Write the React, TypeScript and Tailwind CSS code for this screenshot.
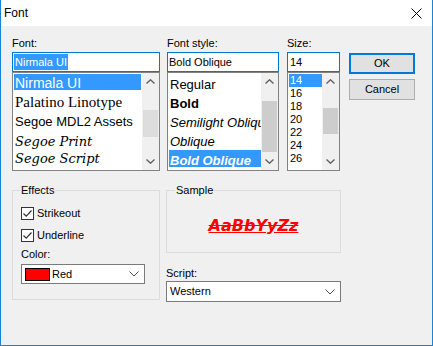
import React from "react";

const Chevron = ({ up = false }: { up?: boolean }) => (
  <svg width="9" height="5" viewBox="0 0 9 5" className="block">
    <polyline
      points={up ? "0.5,4.5 4.5,0.8 8.5,4.5" : "0.5,0.5 4.5,4.2 8.5,0.5"}
      fill="none"
      stroke="#606060"
      strokeWidth="1.4"
    />
  </svg>
);

function ScrollBar({ thumbTop, thumbH, thumbColor = "bg-[#cdcdcd]" }: { thumbTop: number; thumbH: number; thumbColor?: string }) {
  return (
    <div className="w-[17px] shrink-0 bg-[#f0f0f0] flex flex-col">
      <div className="h-[17px] flex items-center justify-center">
        <Chevron up />
      </div>
      <div className="flex-1 flex flex-col items-center">
        <div className={`w-[15px] ${thumbColor}`} style={{ marginTop: thumbTop, height: thumbH }} />
      </div>
      <div className="h-[17px] flex items-center justify-center">
        <Chevron />
      </div>
    </div>
  );
}

function Combo({ children, h }: { children: React.ReactNode; h: string }) {
  return (
    <div className={`${h} border border-[#7a7a7a] bg-white flex items-center pr-[5px]`}>
      <div className="flex-1 flex items-center">{children}</div>
      <svg width="10" height="6" viewBox="0 0 10 6">
        <polyline points="0.5,0.5 5,5 9.5,0.5" fill="none" stroke="#505050" strokeWidth="1" />
      </svg>
    </div>
  );
}

function CheckRow({ label }: { label: string }) {
  return (
    <div className="h-[13px] flex items-center">
      <div className="w-[13px] h-[13px] border border-[#333333] bg-white flex items-center justify-center">
        <svg width="11" height="11" viewBox="0 0 11 11">
          <polyline points="1.5,5.5 4.2,8.2 9.5,2.5" fill="none" stroke="#333333" strokeWidth="1.2" />
        </svg>
      </div>
      <span className="ml-[3px]">{label}</span>
    </div>
  );
}

export default function App() {
  const sizes = ["14", "16", "18", "20", "22", "24", "26"];
  return (
    <div className="w-[433px] h-[346px] flex flex-col border-x border-b border-[#1883d7] bg-[#f0f0f0] font-['Liberation_Sans',Arial,sans-serif] text-[11px] text-black select-none">
      {/* Title bar */}
      <div className="h-[26px] shrink-0 bg-white flex items-center justify-between">
        <span className="pl-[3px] text-[12px]">Font</span>
        <svg width="11" height="11" viewBox="0 0 11 11" className="mr-[10px]">
          <path d="M0.5 0.5 L10.5 10.5 M10.5 0.5 L0.5 10.5" stroke="#000" strokeWidth="1" />
        </svg>
      </div>

      <div className="flex-1 pl-[11px] pt-[10px]">
        {/* Top row */}
        <div className="flex items-start">
          {/* Font */}
          <div className="w-[148px] flex flex-col">
            <div className="h-[16px] leading-[14px]">Font:</div>
            <div className="h-[20px] border border-[#0078d7] bg-white p-[1px] flex">
              <span className="bg-[#3399ff] text-white px-[1px] leading-[16px]">Nirmala UI</span>
            </div>
            <div className="h-[99px] border border-[#828282] bg-white flex">
              <div className="flex-1 overflow-hidden p-[1px] whitespace-nowrap">
                <div className="h-[16px] pt-[2px] pl-[1px] leading-none text-[14px] bg-[#3399ff] text-white">Nirmala UI</div>
                <div className="h-[20px] pt-[5px] pl-[1px] leading-none text-[15px] font-['Liberation_Serif',serif]">Palatino Linotype</div>
                <div className="h-[18px] pt-[5px] pl-[1px] leading-none text-[13px]">Segoe MDL2 Assets</div>
                <div className="h-[20px] pt-[7px] pl-[1px] leading-none text-[13px] italic font-['DejaVu_Serif',serif]">Segoe Print</div>
                <div className="h-[20px] pt-[4px] pl-[1px] leading-none text-[13px] italic font-['DejaVu_Serif',serif]">Segoe Script</div>
              </div>
              <ScrollBar thumbTop={20} thumbH={27} thumbColor="bg-[#dddddd]" />
            </div>
          </div>

          {/* Font style */}
          <div className="w-[112px] ml-[7px] flex flex-col">
            <div className="h-[16px] leading-[14px]">Font style:</div>
            <div className="h-[20px] border border-[#0078d7] bg-white pl-[1px] leading-[18px]">Bold Oblique</div>
            <div className="h-[99px] border border-[#828282] bg-white flex">
              <div className="flex-1 min-w-0 overflow-hidden py-[1px] pl-[1px] whitespace-nowrap text-[13px]">
                <div className="h-[19px] pt-[4px] pl-[1px] leading-none">Regular</div>
                <div className="h-[19px] pt-[4px] pl-[1px] leading-none font-bold">Bold</div>
                <div className="h-[19px] pt-[4px] pl-[1px] leading-none italic overflow-hidden">Semilight Oblique</div>
                <div className="h-[19px] pt-[4px] pl-[1px] leading-none italic">Oblique</div>
                <div className="h-[17px] pt-[4px] pl-[1px] leading-none italic font-bold bg-[#3399ff] text-white">Bold Oblique</div>
              </div>
              <ScrollBar thumbTop={11} thumbH={51} />
            </div>
          </div>

          {/* Size */}
          <div className="w-[53px] ml-[8px] flex flex-col">
            <div className="h-[16px] leading-[14px]">Size:</div>
            <div className="h-[20px] border border-[#0078d7] bg-white pl-[2px] leading-[18px]">14</div>
            <div className="h-[99px] border border-[#828282] bg-white flex">
              <div className="flex-1 overflow-hidden py-[1px] pl-[1px]">
                {sizes.map((s, i) => (
                  <div
                    key={s}
                    className={`h-[13px] pt-[1px] pl-[1px] leading-none ${i === 0 ? "bg-[#3399ff] text-white" : ""}`}
                  >
                    {s}
                  </div>
                ))}
              </div>
              <ScrollBar thumbTop={18} thumbH={26} />
            </div>
          </div>

          {/* Buttons */}
          <div className="w-[66px] ml-[9px] mt-[17px] flex flex-col">
            <button className="h-[21px] border-2 border-[#0078d7] bg-[#e1e1e1] flex items-center justify-center">OK</button>
            <button className="h-[21px] mt-[5px] border border-[#adadad] bg-[#e1e1e1] flex items-center justify-center">Cancel</button>
          </div>
        </div>

        {/* Bottom row */}
        <div className="flex items-start mt-[11px]">
          <fieldset className="w-[148px] h-[118px] border border-[#dcdcdc]">
            <legend className="ml-[7px] px-[1px] leading-[16px]">Effects</legend>
            <div className="pl-[8px] pr-[14px] flex flex-col">
              <div className="mt-[9px]">
                <CheckRow label="Strikeout" />
              </div>
              <div className="mt-[9px]">
                <CheckRow label="Underline" />
              </div>
              <div className="mt-[4px] h-[16px] leading-[16px]">Color:</div>
              <div className="mt-[2px]">
                <Combo h="h-[20px]">
                  <div className="ml-[3px] w-[25px] h-[13px] bg-[#ff0000] border border-black" />
                  <span className="ml-[2px]">Red</span>
                </Combo>
              </div>
            </div>
          </fieldset>

          <div className="w-[175px] ml-[6px] flex flex-col">
            <fieldset className="h-[71px] border border-[#dcdcdc]">
              <legend className="ml-[8px] px-[1px] leading-[16px]">Sample</legend>
              <div className="h-[53px] flex items-center justify-center pt-[3px]">
                <span className="font-['DejaVu_Sans',sans-serif] font-bold italic text-[16px] leading-none text-[#ff0000] [text-decoration-line:underline_line-through]">
                  AaBbYyZz
                </span>
              </div>
            </fieldset>
            <div className="mt-[12px] h-[16px] leading-[16px]">Script:</div>
            <Combo h="h-[21px]">
              <span className="ml-[3px]">Western</span>
            </Combo>
          </div>
        </div>
      </div>
    </div>
  );
}
